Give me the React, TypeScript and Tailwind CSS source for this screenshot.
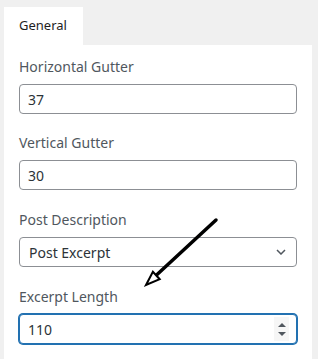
import React from "react";

function Label({ children }: { children: React.ReactNode }) {
  return <div className="mb-[7px] h-5 text-[14px] leading-5 text-[#50575e]">{children}</div>;
}

function TextField({ value }: { value: string }) {
  return (
    <div className="flex h-[30px] items-center rounded-[4px] border border-[#8c8f94] bg-white px-2 text-[14px] text-[#2c3338]">
      {value}
    </div>
  );
}

export default function App() {
  return (
    <div className="relative h-[359px] w-[318px] overflow-hidden bg-[#f0f0f0] pl-1 pr-[6px] pt-[7px] font-['Noto_Sans',sans-serif]">
      {/* Tab */}
      <div className="flex h-[38px] w-[79px] items-center bg-white pl-[15px] text-[13px] text-[#1e1e1e]">
        General
      </div>

      {/* Panel */}
      <div className="h-[320px] bg-white px-[15px] pt-[12px]">
        <Label>Horizontal Gutter</Label>
        <TextField value="37" />

        <div className="mt-[19px]">
          <Label>Vertical Gutter</Label>
          <TextField value="30" />
        </div>

        <div className="mt-[20px]">
          <Label>Post Description</Label>
          <div className="flex h-[30px] items-center justify-between rounded-[4px] border border-[#8c8f94] bg-white pl-[9px] pr-[10px] text-[14px] text-[#2c3338]">
            <span>Post Excerpt</span>
            <svg width="10" height="6" viewBox="0 0 10 6" fill="none">
              <path d="M1 1l4 4 4-4" stroke="#50575e" strokeWidth="1.5" />
            </svg>
          </div>
        </div>

        <div className="mt-[20px]">
          <Label>Excerpt Length</Label>
          <div className="flex h-[30px] items-center justify-between rounded-[4px] border border-[#2271b1] bg-white pl-2 pr-[7px] text-[14px] text-[#2c3338] shadow-[0_0_0_1px_#2271b1]">
            <span>110</span>
            <div className="flex h-[24px] w-[15px] flex-col items-center justify-center gap-[5px] bg-[#f6f6f6]">
              <svg width="8" height="4" viewBox="0 0 8 4">
                <path d="M0 4L4 0L8 4Z" fill="#50575e" />
              </svg>
              <svg width="8" height="4" viewBox="0 0 8 4">
                <path d="M0 0L4 4L8 0Z" fill="#50575e" />
              </svg>
            </div>
          </div>
        </div>
      </div>

      {/* Annotation arrow */}
      <svg className="pointer-events-none absolute inset-0" width="318" height="359" viewBox="0 0 318 359">
        <line x1="216" y1="220" x2="156" y2="275.5" stroke="#000" strokeWidth="3.5" strokeLinecap="round" />
        <path d="M146 285L152.9 271.8L159.7 279.2Z" fill="#fff" stroke="#000" strokeWidth="2" strokeLinejoin="miter" />
      </svg>
    </div>
  );
}
